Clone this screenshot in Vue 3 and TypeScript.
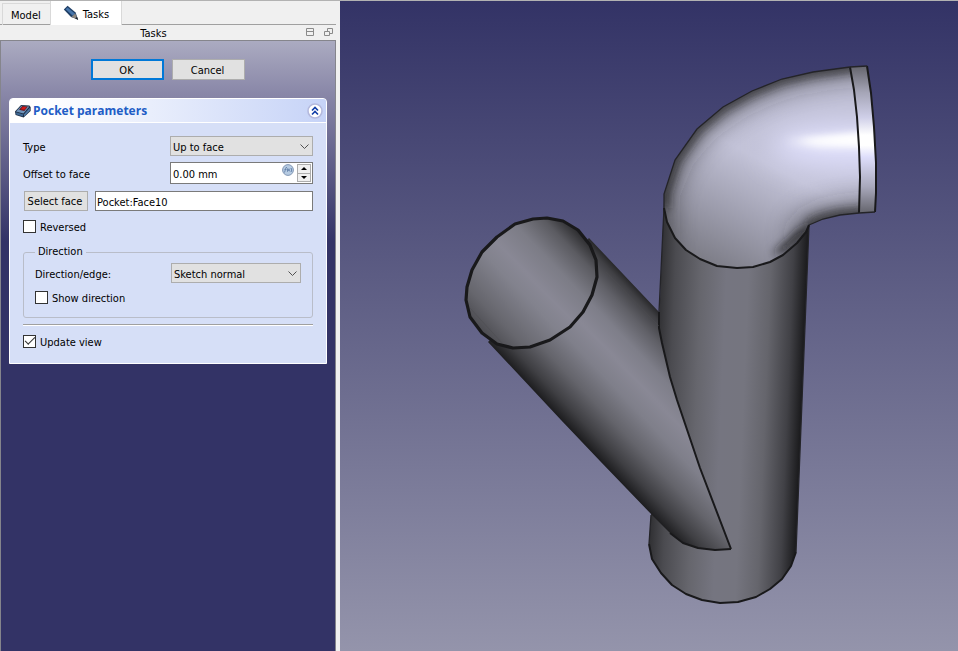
<script setup lang="ts">
import { ref } from 'vue'

type Point = [number, number]

const activeTab = ref<'model' | 'tasks'>('tasks')
const type = ref('Up to face')
const offset = ref('0.00 mm')
const face = ref('Pocket:Face10')
const direction = ref('Sketch normal')
const reversed = ref(false)
const showDirection = ref(false)
const updateView = ref(true)
const expanded = ref(true)

function step(delta: number) {
  offset.value = `${((parseFloat(offset.value) || 0) + delta).toFixed(2)} mm`
}

const line = (points: Point[]) => 'M' + points.map((p) => p.join(' ')).join('L')

// Elbow outline, split in the edges that are stroked separately
const elbowOuter: Point[] = [[664, 208], [664, 194], [675, 160], [697, 129], [723, 107], [752, 91], [782, 79], [813, 72], [850, 67]]
const elbowSeam: Point[] = [[850, 67], [854, 90], [857, 117], [859, 147], [860, 177], [859, 213]]
const elbowInner: Point[] = [[859, 213], [840, 215], [823, 219], [809, 225]]
const elbowBase: Point[] = [[809, 225], [806, 232], [797, 243], [783, 255], [770, 262], [753, 267], [737, 268], [717, 266], [700, 259], [686, 250], [675, 238], [667, 222], [664, 208]]
const flangeEnd: Point[] = [[867, 66], [871, 93], [874, 127], [876, 163], [876, 193], [875, 212]]
const elbow = line([...elbowOuter, ...elbowSeam, ...elbowInner, ...elbowBase]) + 'Z'
const flange = line([...elbowSeam, ...[...flangeEnd].reverse()]) + 'Z'

const pipeFoot: Point[] = [[796, 552], [791, 566], [782, 579], [770, 589], [756, 597], [738, 602], [720, 603], [702, 600], [686, 594], [672, 585], [661, 573], [652, 559], [649, 544]]
const pipe = line([[664, 200], [809, 225], ...pipeFoot, [651, 515], [659, 325]]) + 'Z'

const branchSeam: Point[] = [[659, 312], [659, 328], [662, 343], [670, 377], [677, 400], [700, 468], [731, 549]]
const branchToe: Point[] = [[731, 549], [715, 550], [698, 548], [683, 543], [670, 533], [652, 515]]
const branch = line([[589, 238], ...branchSeam, ...branchToe, [600, 461], [561, 420], [488, 342]]) + 'Z'
const mouth = line([[547, 218], [563, 221], [578, 230], [590, 245], [596, 260], [597, 277], [592, 295], [583, 312], [570, 327], [550, 340], [530, 347], [513, 348], [497, 344], [482, 333], [470, 317], [466, 300], [467, 287], [472, 270], [482, 252], [497, 237], [515, 224], [533, 219]]) + 'Z'
</script>

<template>
  <main class="app">
    <aside class="dock">
      <nav class="tabs" role="tablist">
        <button class="tab" role="tab" :class="{ active: activeTab === 'model' }" :aria-selected="activeTab === 'model'" @click="activeTab = 'model'">Model</button>
        <button class="tab" role="tab" :class="{ active: activeTab === 'tasks' }" :aria-selected="activeTab === 'tasks'" @click="activeTab = 'tasks'">
          <svg width="16" height="16" viewBox="0 0 16 16" aria-hidden="true">
            <path d="M.8 4.4 4.6 .8 12.6 7.6 15 14.6 8 12z" fill="#1f3f66" />
            <path d="M2.6 4.2 4.6 2.4 12 8.8 9.8 10.8z" fill="#4675ab" />
            <path d="M8.4 12 12.2 8.4 15 14.6z" fill="#8b8680" />
            <path d="M12.2 13.4 14 11.8 15.2 14.9z" fill="#1d2530" />
          </svg>
          <span>Tasks</span>
        </button>
      </nav>

      <header class="titlebar">
        <span class="title">Tasks</span>
        <button class="tool" aria-label="Collapse">
          <svg width="9" height="9" viewBox="0 0 9 9"><path d="M1.5 .5h7v7h-7zM1.5 3.5h7" /></svg>
        </button>
        <button class="tool" aria-label="Float">
          <svg width="9" height="9" viewBox="0 0 9 9"><path d="M3.5 3V.5h5v5H6M.5 3.5h5v4h-5z" /></svg>
        </button>
      </header>

      <section class="panel">
        <div class="actions">
          <button class="btn primary">OK</button>
          <button class="btn">Cancel</button>
        </div>

        <section class="card">
          <header class="card-head">
            <svg width="16" height="16" viewBox="0 0 16 16" aria-hidden="true">
              <path d="M0 8.4 6 2 14.4 2.4 15.6 4V8L8.6 14.6 .6 12z" fill="#1b2c42" />
              <path d="M1 8.4 6.4 2.8 14.4 3.6 8.4 10.4z" fill="#6e93ba" />
              <path d="M1 9.2 8 11.2V13.6L1.2 11.5z" fill="#3c6590" />
              <path d="M9 11.2 14.8 4.8V7.8L9 13.4z" fill="#4f7aa8" />
              <path d="M4 6.8 7.4 3 12.8 3.6 9.4 8z" fill="#661a20" />
              <path d="M5.8 6.2 7.8 3.8 11.6 4.2 9.4 6.8z" fill="#d51616" />
            </svg>
            <h2>Pocket parameters</h2>
            <button class="fold" aria-label="Toggle parameters" :aria-expanded="expanded" @click="expanded = !expanded">
              <svg width="16" height="16" viewBox="0 0 16 16">
                <circle cx="8" cy="8" r="7" fill="#fff" stroke="#b4b9dd" stroke-width="1.6" />
                <path d="M5 7.5 8 4.5 11 7.5M5 11.5 8 8.5 11 11.5" fill="none" stroke="#103da8" stroke-width="1.6" />
              </svg>
            </button>
          </header>

          <form v-if="expanded" class="card-body" @submit.prevent>
            <div class="row">
              <label for="type">Type</label>
              <span class="combo">
                <select id="type" v-model="type">
                  <option>Dimension</option>
                  <option>Through all</option>
                  <option>Up to face</option>
                </select>
                <svg width="9" height="6" viewBox="0 0 9 6"><path d="M.5 .5 4.5 4.5 8.5 .5" /></svg>
              </span>
            </div>

            <div class="row">
              <label for="offset">Offset to face</label>
              <span class="spin">
                <input id="offset" v-model="offset" type="text" />
                <svg class="fx" width="12" height="12" viewBox="0 0 12 12" aria-hidden="true">
                  <circle cx="6" cy="6" r="5.4" fill="#b6cbe2" stroke="#8297b4" />
                  <path d="M2.5 8.5 4 3.5H5M2.5 5.5H4.5M5.5 4.5V7.5M5.5 7.5 8 4.5M6 4.5 8 7.5M9.2 4Q10 6 9.2 8" fill="none" stroke="#6582aa" stroke-width=".9" />
                </svg>
                <span class="steps">
                  <button type="button" aria-label="Increase" @click="step(1)"><svg width="6" height="3" viewBox="0 0 6 3"><path d="M0 3 3 0 6 3z" /></svg></button>
                  <button type="button" aria-label="Decrease" @click="step(-1)"><svg width="6" height="3" viewBox="0 0 6 3"><path d="M0 0H6L3 3z" /></svg></button>
                </span>
              </span>
            </div>

            <div class="face-row">
              <button type="button" class="btn small">Select face</button>
              <input v-model="face" class="text" type="text" aria-label="Face" />
            </div>

            <label class="check"><input v-model="reversed" type="checkbox" /><span>Reversed</span></label>

            <fieldset>
              <legend>Direction</legend>
              <div class="row">
                <label for="direction">Direction/edge:</label>
                <span class="combo">
                  <select id="direction" v-model="direction">
                    <option>Sketch normal</option>
                    <option>Select reference...</option>
                    <option>Custom direction</option>
                  </select>
                  <svg width="9" height="6" viewBox="0 0 9 6"><path d="M.5 .5 4.5 4.5 8.5 .5" /></svg>
                </span>
              </div>
              <label class="check"><input v-model="showDirection" type="checkbox" /><span>Show direction</span></label>
            </fieldset>

            <hr />
            <label class="check"><input v-model="updateView" type="checkbox" /><span>Update view</span></label>
          </form>
        </section>
      </section>
    </aside>

    <section class="viewport">
      <svg class="scene" viewBox="340 1 618 650" preserveAspectRatio="xMidYMid slice" role="img" aria-label="Pipe fitting">
        <defs>
          <linearGradient id="pipeShade" gradientUnits="userSpaceOnUse" x1="655" y1="400" x2="802" y2="406">
            <stop offset="0" stop-color="#303033" />
            <stop offset=".1" stop-color="#4b4b50" />
            <stop offset=".28" stop-color="#66666d" />
            <stop offset=".45" stop-color="#757580" />
            <stop offset=".6" stop-color="#75757f" />
            <stop offset=".75" stop-color="#65656c" />
            <stop offset=".9" stop-color="#414146" />
            <stop offset="1" stop-color="#19191b" />
          </linearGradient>
          <linearGradient id="branchShade" gradientUnits="userSpaceOnUse" x1="561" y1="420" x2="667" y2="319">
            <stop offset="0" stop-color="#1c1c1e" />
            <stop offset=".1" stop-color="#3f3f43" />
            <stop offset=".25" stop-color="#64646b" />
            <stop offset=".42" stop-color="#7f7f8a" />
            <stop offset=".56" stop-color="#898895" />
            <stop offset=".7" stop-color="#7e7e89" />
            <stop offset=".84" stop-color="#606067" />
            <stop offset=".95" stop-color="#3f3f43" />
            <stop offset="1" stop-color="#252527" />
          </linearGradient>
          <linearGradient id="mouthShade" gradientUnits="userSpaceOnUse" x1="482" y1="333" x2="584" y2="235">
            <stop offset="0" stop-color="#4b4b50" />
            <stop offset=".15" stop-color="#66666d" />
            <stop offset=".4" stop-color="#82828d" />
            <stop offset=".52" stop-color="#898895" />
            <stop offset=".7" stop-color="#7c7c86" />
            <stop offset=".87" stop-color="#5b5b61" />
            <stop offset="1" stop-color="#29292b" />
          </linearGradient>
          <linearGradient id="elbowShade" gradientUnits="userSpaceOnUse" x1="715" y1="268" x2="800" y2="110">
            <stop offset="0" stop-color="#7c7c86" />
            <stop offset=".3" stop-color="#9d9dad" />
            <stop offset=".65" stop-color="#c3c3d8" />
            <stop offset="1" stop-color="#c0c0d6" />
          </linearGradient>
          <linearGradient id="flangeShade" x1="0" y1="0" x2="0" y2="1">
            <stop offset="0" stop-color="#64646c" />
            <stop offset=".18" stop-color="#a5a5b7" />
            <stop offset=".35" stop-color="#cfcfe8" />
            <stop offset=".47" stop-color="#ffffff" />
            <stop offset=".54" stop-color="#ffffff" />
            <stop offset=".62" stop-color="#dedefb" />
            <stop offset=".82" stop-color="#a9a9bc" />
            <stop offset="1" stop-color="#64646c" />
          </linearGradient>
          <clipPath id="elbowClip"><path :d="elbow" /></clipPath>
          <filter id="soft3" filterUnits="userSpaceOnUse" x="600" y="0" width="350" height="350"><feGaussianBlur stdDeviation="3" /></filter>
          <filter id="soft5" filterUnits="userSpaceOnUse" x="600" y="0" width="350" height="350"><feGaussianBlur stdDeviation="5" /></filter>
          <filter id="soft14" filterUnits="userSpaceOnUse" x="600" y="0" width="350" height="350"><feGaussianBlur stdDeviation="14" /></filter>
        </defs>

        <path :d="pipe" fill="url(#pipeShade)" />
        <path :d="line(pipeFoot)" class="edge" />
        <path d="M796 552 809 225M664 208 659 312M649 544 651 515" class="rim" />

        <path :d="branch" fill="url(#branchShade)" />
        <path :d="line(branchSeam)" class="edge" />
        <path :d="line(branchToe.slice(0, 5))" class="edge" />
        <path d="M606 272 659 326" class="hair" />
        <path :d="mouth" fill="url(#mouthShade)" />
        <path d="M470 308 502 343" class="hair" />
        <path :d="mouth" class="edge thick" />

        <g clip-path="url(#elbowClip)">
          <path :d="elbow" fill="url(#elbowShade)" />
          <ellipse cx="850" cy="146" rx="80" ry="24" fill="#dedefa" filter="url(#soft14)" />
          <path d="M655 250V194L670 155 695 124 723 102 752 86 782 74 813 67 850 62 900 58" class="shade wide" filter="url(#soft14)" />
          <path :d="line([...elbowOuter, [890, 62]])" class="shade near" filter="url(#soft5)" />
          <path d="M900 216 859 217 840 219 823 223 809 229 800 245" class="shade wide" filter="url(#soft14)" />
          <path d="M890 213 859 213 840 215 823 219 809 225" class="shade near" filter="url(#soft5)" />
          <path d="M812 222 807 234 784 253 772 255 797 232Z" fill="#1b1b1d" filter="url(#soft5)" />
          <path d="M784 141 822 137 880 131V148L820 147Z" fill="#fff" filter="url(#soft5)" />
          <path d="M800 140 870 134V144L812 142Z" fill="#fff" filter="url(#soft3)" />
        </g>
        <path :d="flange" fill="url(#flangeShade)" />
        <path :d="line(elbowBase)" class="edge" />
        <path :d="line(elbowSeam)" class="edge" />
        <path :d="line(flangeEnd)" class="edge" />
        <path :d="line(elbowOuter)" class="rim" />
        <path d="M850 67 867 66M875 212 859 213 840 215 823 219 809 225" class="rim" />
      </svg>
    </section>
  </main>
</template>

<style>
body {
  margin: 0;
}
</style>

<style scoped>
.app {
  display: grid;
  grid-template-columns: 336px minmax(0, 1fr);
  column-gap: 4px;
  box-sizing: border-box;
  min-height: 100vh;
  border-top: 1px solid #b2b2b2;
  background: #f0f0f0;
  color: #000;
  font-family: "DejaVu Sans Condensed", "Noto Sans", sans-serif;
  font-size: 11px;
  line-height: 14px;
}
button, input, select {
  box-sizing: border-box;
  margin: 0;
  padding: 0;
  color: inherit;
  font: inherit;
}
svg {
  display: block;
}
.dock {
  display: flex;
  flex-direction: column;
}
.tabs {
  display: flex;
  align-items: flex-end;
  height: 24px;
  padding-left: 2px;
  box-shadow: inset 0 -1px #a0a0a0;
}
.tab {
  display: flex;
  align-items: center;
  gap: 4px;
  height: 22px;
  padding: 2px 9px 0 8px;
  border: 1px solid #d9d9d9;
  border-width: 1px 0 0 1px;
  background: #f0f0f0;
  box-shadow: inset 0 -1px #a0a0a0;
}
.tab.active {
  height: 24px;
  padding: 0 12px;
  border-width: 0 1px;
  background: #fff;
  box-shadow: none;
}
.tab span {
  padding-top: 3px;
}
.titlebar {
  display: flex;
  align-items: center;
  gap: 10px;
  height: 15px;
  padding-right: 3px;
}
.title {
  flex: 1;
  padding: 2px 0 0 12px;
  text-align: center;
}
.tool {
  border: 0;
  background: none;
}
.tool path {
  fill: none;
  stroke: #8a8a8a;
}
.panel {
  flex: 1;
  padding: 18px 8px 20px;
  border: solid #85858c;
  border-width: 1px 1px 0;
  background: linear-gradient(#ababc1 0, #8886a7 54px, #333366 200px);
}
.actions {
  display: flex;
  justify-content: center;
  gap: 8px;
  margin-bottom: 18px;
}
.btn {
  width: 73px;
  height: 21px;
  padding: 2px 2px 0 0;
  border: 1px solid #adadad;
  background: #e1e1e1;
}
.btn.primary {
  border: 2px solid #0078d7;
}
.btn.small {
  width: 64px;
  height: 20px;
}
.card {
  overflow: hidden;
  border: 1px solid #fff;
  border-radius: 4px 4px 0 0;
  background: #d6dff7;
}
.card-head {
  display: flex;
  align-items: center;
  gap: 2px;
  height: 23px;
  padding: 0 3px 0 5px;
  border-bottom: 1px solid #fff;
  background: linear-gradient(90deg, #fff 10%, #c6d3f7);
}
h2 {
  flex: 1;
  margin: 0;
  color: #215dc6;
  font-family: "Open Sans", "Noto Sans", sans-serif;
  font-size: 12px;
  font-weight: 700;
}
.fold {
  border: 0;
  background: none;
}
.card-body {
  display: flex;
  flex-direction: column;
  padding: 13px 13px 15px;
}
.row {
  display: grid;
  grid-template-columns: 147px minmax(0, 1fr);
  align-items: center;
  margin-bottom: 6px;
}
.row label {
  padding-top: 4px;
}
.combo {
  position: relative;
}
.combo select {
  display: block;
  width: 100%;
  height: 20px;
  padding: 3px 20px 0 2px;
  border: 1px solid #adadad;
  border-radius: 0;
  background: #e1e1e1;
  appearance: none;
}
.combo svg {
  position: absolute;
  top: 8px;
  right: 4px;
  pointer-events: none;
}
.combo path {
  fill: none;
  stroke: #505050;
}
.spin {
  display: flex;
  box-sizing: border-box;
  height: 22px;
  padding: 1px;
  border: 1px solid #7a7a7a;
  background: #fff;
}
.spin input {
  flex: 1;
  min-width: 0;
  padding: 3px 1px 0;
  border: 0;
  background: none;
}
.fx {
  margin-right: 3px;
}
.steps {
  display: flex;
  flex-direction: column;
  width: 14px;
}
.steps button {
  display: grid;
  flex: 1;
  place-items: center;
  border: 1px solid #adadad;
  background: #f0f0f0;
}
.steps button + button {
  border-top: 0;
}
.face-row {
  display: flex;
  gap: 7px;
  margin: 1px 0 8px 1px;
}
.text {
  flex: 1;
  min-width: 0;
  height: 20px;
  padding: 2px 1px 0;
  border: 1px solid #7a7a7a;
  background: #fff;
}
.check {
  display: flex;
  align-items: center;
  gap: 4px;
  height: 14px;
}
.check span {
  padding-top: 3px;
}
.check input {
  display: grid;
  width: 13px;
  height: 13px;
  place-items: center;
  border: 1px solid #333;
  background: #fff;
  appearance: none;
}
.check input:checked::after {
  width: 10px;
  height: 5px;
  margin-top: -3px;
  border: solid #333;
  border-width: 0 0 1px 1px;
  box-sizing: border-box;
  transform: rotate(-45deg);
  content: "";
}
fieldset {
  min-width: 0;
  margin: 12px 0 6px;
  padding: 4px 11px 13px;
  border: 1px solid #b9bdc9;
  border-radius: 3px;
}
legend {
  padding: 0 3px;
}
fieldset .row {
  grid-template-columns: 136px minmax(0, 1fr);
  margin-bottom: 7px;
}
hr {
  width: 100%;
  height: 1px;
  margin: 0 0 8px;
  border: 0;
  border-top: 1px solid #a0a0a0;
  background: #fff;
}
.viewport {
  display: grid;
  min-width: 0;
  background: linear-gradient(#333366, #9494ab);
}
.scene {
  width: 100%;
  height: 100%;
}
.edge {
  fill: none;
  stroke: #19191b;
  stroke-width: 2;
  stroke-linejoin: round;
}
.edge.thick {
  stroke-width: 3.2;
}
.rim {
  fill: none;
  stroke: #242428;
  stroke-width: 1.3;
}
.hair {
  fill: none;
  stroke: #4c4c50;
  stroke-width: .5;
}
.shade {
  fill: none;
  stroke: #1b1b1d;
}
.shade.wide {
  opacity: .7;
  stroke-width: 24;
}
.shade.near {
  opacity: .75;
  stroke-width: 9;
}
</style>
